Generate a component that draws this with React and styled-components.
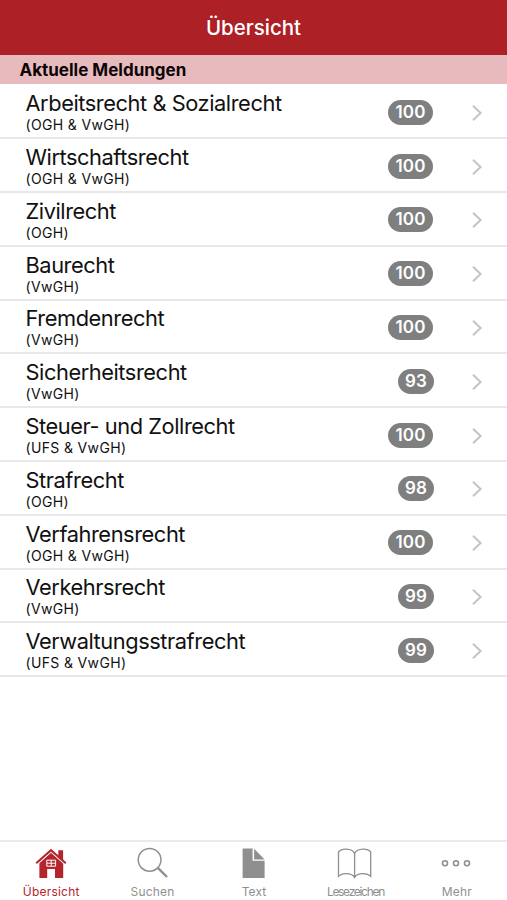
import React from 'react';
import styled, { createGlobalStyle } from 'styled-components';

const topics = [
	{ title: 'Arbeitsrecht & Sozialrecht', courts: '(OGH & VwGH)', count: 100 },
	{ title: 'Wirtschaftsrecht', courts: '(OGH & VwGH)', count: 100 },
	{ title: 'Zivilrecht', courts: '(OGH)', count: 100 },
	{ title: 'Baurecht', courts: '(VwGH)', count: 100 },
	{ title: 'Fremdenrecht', courts: '(VwGH)', count: 100 },
	{ title: 'Sicherheitsrecht', courts: '(VwGH)', count: 93 },
	{ title: 'Steuer- und Zollrecht', courts: '(UFS & VwGH)', count: 100 },
	{ title: 'Strafrecht', courts: '(OGH)', count: 98 },
	{ title: 'Verfahrensrecht', courts: '(OGH & VwGH)', count: 100 },
	{ title: 'Verkehrsrecht', courts: '(VwGH)', count: 99 },
	{ title: 'Verwaltungsstrafrecht', courts: '(UFS & VwGH)', count: 99 },
];

const tabs = [
	{ label: 'Übersicht', icon: HouseIcon, active: true, spacing: '0.2px' },
	{ label: 'Suchen', icon: SearchIcon, spacing: '0.2px' },
	{ label: 'Text', icon: PageIcon, spacing: '0.1px' },
	{ label: 'Lesezeichen', icon: BookIcon, spacing: '-1.3px' },
	{ label: 'Mehr', icon: MoreIcon, spacing: '0.2px' },
];

export default function App(){
	return(
		<Screen>
			<GlobalStyle/>
			<NavBar>Übersicht</NavBar>
			<SectionTitle>Aktuelle Meldungen</SectionTitle>
			<List>
				{topics.map(topic => (
					<Row key={topic.title}>
						<RowText>
							<Title>{topic.title}</Title>
							<Courts>{topic.courts}</Courts>
						</RowText>
						<Badge $short={topic.count < 100}>{topic.count}</Badge>
						<Chevron viewBox="0 0 12 18">
							<path d="M2 1.8 L9.6 9 L2 16.2"/>
						</Chevron>
					</Row>
				))}
			</List>
			<TabBar>
				{tabs.map(({ label, icon: Icon, active, spacing }) => (
					<Tab key={label} $active={active}>
						<Icon/>
						<TabLabel $spacing={spacing}>{label}</TabLabel>
					</Tab>
				))}
			</TabBar>
		</Screen>
	);
}

function HouseIcon(){
	return(
		<TabIcon viewBox="0 0 36 34">
			<path fill="currentColor" d="M25.3 4.3h4.8v11l-4.8-4z"/>
			<path fill="currentColor" d="M18 6.2 L30.2 16.8 V32 H22 V23 H14.2 V32 H6.4 V16.8 Z"/>
			<path fill="none" stroke="#fff" strokeWidth="0.9" d="M4.5 18.4 L18 6.4 L31.5 18.4"/>
			<path fill="none" stroke="currentColor" strokeWidth="2" d="M3.2 17.3 L18 4.2 L32.8 17.3"/>
			<path fill="none" stroke="#fff" strokeWidth="1" d="M13.8 14.2h8.8v6h-8.8z M18.2 14v6 M14 17.2h8.4"/>
		</TabIcon>
	);
}

function SearchIcon(){
	return(
		<TabIcon viewBox="0 0 36 34" fill="none" stroke="currentColor">
			<circle cx="14.6" cy="13.8" r="11.4" strokeWidth="1.5"/>
			<path strokeWidth="2.4" d="M22.6 21.6 L32 31"/>
		</TabIcon>
	);
}

function PageIcon(){
	return(
		<TabIcon viewBox="0 0 36 34" fill="currentColor">
			<path d="M6.6 2.6h10v12.2h12V32h-22z"/>
			<path d="M18.1 2.8 L28.6 13.4 H18.1z"/>
		</TabIcon>
	);
}

function BookIcon(){
	return(
		<TabIcon viewBox="0 0 36 34" fill="none" stroke="currentColor" strokeWidth="1.3">
			<path d="M17.6 7.4 C14.8 2 4.6 2 1.5 6 V30.4 C5 26.6 14.8 26.6 17.6 31.4 C20.4 26.6 30.2 26.6 33.7 30.4 V6 C30.6 2 20.4 2 17.6 7.4 V31"/>
		</TabIcon>
	);
}

function MoreIcon(){
	return(
		<TabIcon viewBox="0 0 36 34" fill="none" stroke="currentColor" strokeWidth="1.6">
			<circle cx="6" cy="17.3" r="2.5"/>
			<circle cx="17" cy="17.3" r="2.5"/>
			<circle cx="28" cy="17.3" r="2.5"/>
		</TabIcon>
	);
}

const GlobalStyle = createGlobalStyle`
*{box-sizing:border-box;}
body{margin:0;background:#fff;font-family:Inter, "Liberation Sans", sans-serif;}
`

const Screen = styled.div`
height:900px;
display:flex;
flex-direction:column;
background:#fff;
overflow:hidden;
`

const NavBar = styled.header`
flex:none;
height:55px;
display:flex;
align-items:center;
justify-content:center;
background:#ad2026;
color:#fff;
font-size:20.5px;
font-weight:500;
line-height:24px;
`

const SectionTitle = styled.h2`
flex:none;
height:29px;
margin:0;
padding-left:19.5px;
background:#e7bbbe;
color:#0c0405;
font-size:17px;
font-weight:700;
line-height:30px;
`

const List = styled.ul`
flex:1;
margin:0;
padding:1.4px 0 0;
list-style:none;
`

const Row = styled.li`
height:53.8px;
display:flex;
align-items:center;
padding:2px 24px 0 26px;
border-bottom:2px solid #e8e8e8;
`

const RowText = styled.div`
flex:1;
padding-top:2px;
color:#111;
`

const Title = styled.div`
margin-left:-0.5px;
font-size:21.8px;
line-height:24px;
letter-spacing:-0.43px;
white-space:nowrap;
`

const Courts = styled.div`
margin-left:-0.5px;
font-size:14px;
line-height:20px;
letter-spacing:0.35px;
`

const Badge = styled.span`
width:${props => props.$short ? '36px' : '45px'};
height:25px;
margin-right:${props => props.$short ? '37px' : '38px'};
border-radius:13px;
background:#7f7f7f;
color:#fff;
font-size:17px;
font-weight:600;
line-height:24px;
letter-spacing:0.2px;
text-align:center;
`

const Chevron = styled.svg`
width:12px;
height:18px;
margin-top:1px;
fill:none;
stroke:#c4c4c7;
stroke-width:2;
`

const TabBar = styled.nav`
flex:none;
height:60.5px;
display:flex;
border-top:2px solid #ebebeb;
`

const Tab = styled.div`
flex:1;
display:flex;
flex-direction:column;
align-items:center;
padding:4px 0 0 1px;
color:${props => props.$active ? '#b3242b' : '#8f8f8f'};
`

const TabIcon = styled.svg`
width:36px;
height:34px;
`

const TabLabel = styled.span`
margin-top:4px;
font-size:12px;
line-height:16px;
letter-spacing:${props => props.$spacing};
`
